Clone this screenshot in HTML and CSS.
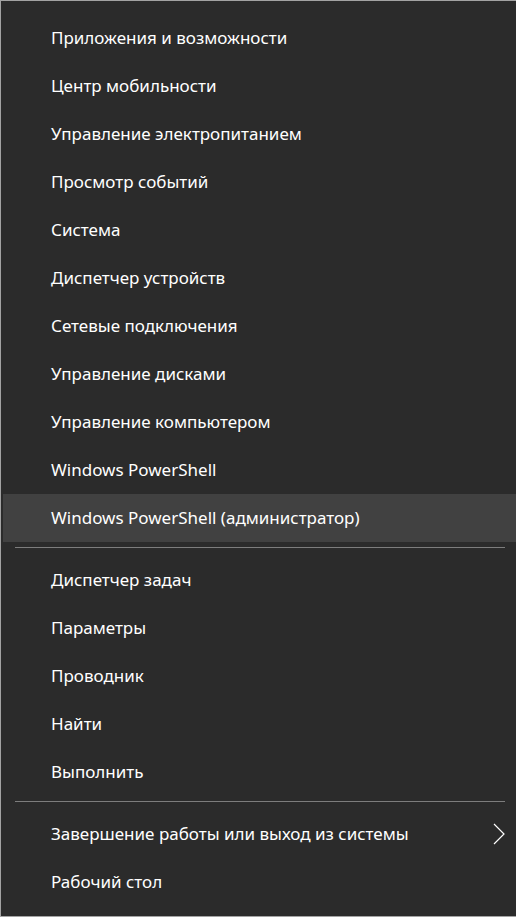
FILE: index.html
```html
<!DOCTYPE html>
<html lang="ru">
<head>
<meta charset="utf-8">
<title>Win+X</title>
<link rel="stylesheet" href="styles.css">
</head>
<body>
<div class="menu">
  <div class="item"><span class="label">Приложения и возможности</span></div>
  <div class="item"><span class="label">Центр мобильности</span></div>
  <div class="item"><span class="label">Управление электропитанием</span></div>
  <div class="item"><span class="label">Просмотр событий</span></div>
  <div class="item"><span class="label">Система</span></div>
  <div class="item"><span class="label">Диспетчер устройств</span></div>
  <div class="item"><span class="label">Сетевые подключения</span></div>
  <div class="item"><span class="label">Управление дисками</span></div>
  <div class="item"><span class="label">Управление компьютером</span></div>
  <div class="item"><span class="label">Windows PowerShell</span></div>
  <div class="item hover"><span class="label">Windows PowerShell (администратор)</span></div>
  <div class="sep"></div>
  <div class="item"><span class="label">Диспетчер задач</span></div>
  <div class="item"><span class="label">Параметры</span></div>
  <div class="item"><span class="label">Проводник</span></div>
  <div class="item"><span class="label">Найти</span></div>
  <div class="item"><span class="label">Выполнить</span></div>
  <div class="sep"></div>
  <div class="item sub"><span class="label">Завершение работы или выход из системы</span>
    <svg class="chev" width="12" height="22" viewBox="0 0 12 22"><path d="M1 1 L11 11 L1 21" fill="none" stroke="#fff" stroke-width="1.2"/></svg>
  </div>
  <div class="item"><span class="label">Рабочий стол</span></div>
</div>
</body>
</html>
```
FILE: styles.css
```css
html, body {
  margin: 0;
  padding: 0;
  background: #2b2b2b;
}
.menu {
  box-sizing: border-box;
  width: 516px;
  height: 917px;
  background: #2b2b2b;
  border-left: 1px solid #a3a3a3;
  border-top: 1px solid #a3a3a3;
  border-bottom: 1px solid #a3a3a3;
  padding: 13px 0 0 2px;
  font-family: "Noto Sans", "Open Sans", sans-serif;
  font-size: 17px;
  color: #ffffff;
}
.item {
  height: 48px;
  display: flex;
  align-items: center;
  padding-left: 48px;
  padding-right: 11px;
}
.item.hover {
  background: #414141;
}
.label {
  flex: 1;
  white-space: nowrap;
  line-height: 22px;
}
.sep {
  height: 1px;
  background: #7d7d7d;
  margin: 5px 11px 8px 12px;
}
.chev {
  display: block;
}
```
